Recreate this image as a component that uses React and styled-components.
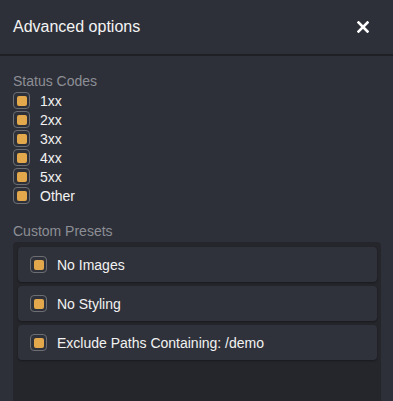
import React, { useState } from 'react';
import styled, { createGlobalStyle } from 'styled-components';

const GlobalStyle = createGlobalStyle`
    html, body {
        margin: 0;
        padding: 0;
        background-color: #2e3039;
        font-family: "Liberation Sans", Arial, sans-serif;
    }
`;

const Panel = styled.div`
    width: 393px;
    height: 401px;
    overflow: hidden;
    background-color: #2e3039;
    color: #f2f2f2;
`;

const Header = styled.div`
    height: 54px;
    padding: 0 13px;
    display: flex;
    align-items: center;
    justify-content: space-between;
    border-bottom: 2px solid #1f2026;
`;

const Title = styled.h1`
    margin: 0;
    font-size: 16px;
    font-weight: normal;
    color: #f4f4f4;
`;

const CloseButton = styled.button`
    width: 24px;
    height: 24px;
    margin-right: 5px;
    padding: 0;
    border: none;
    background: none;
    display: flex;
    align-items: center;
    justify-content: center;
    cursor: pointer;
`;

const Body = styled.div`
    padding: 17px 12px 0 13px;
`;

const SectionLabel = styled.div`
    font-size: 14px;
    line-height: 16px;
    color: #8c8e95;
    margin-bottom: ${p => p.$gap || 2}px;
`;

const CodeList = styled.div`
    display: flex;
    flex-direction: column;
    margin-bottom: 18px;
`;

const Row = styled.label`
    height: 19px;
    display: flex;
    align-items: center;
    gap: 10px;
    font-size: 14px;
    color: #f2f2f2;
    cursor: pointer;
`;

const Box = styled.span`
    width: 17px;
    height: 17px;
    box-sizing: border-box;
    border: 1.5px solid #6c6e74;
    border-radius: 4px;
    display: flex;
    align-items: center;
    justify-content: center;
    flex-shrink: 0;

    &::after {
        content: '';
        width: 10px;
        height: 10px;
        border-radius: 2px;
        background-color: ${p => (p.$checked ? '#e3a84b' : 'transparent')};
    }
`;

const Presets = styled.div`
    min-height: 200px;
    padding: 5px 4px 5px 5px;
    background-color: #25262c;
    border-radius: 4px;
    display: flex;
    flex-direction: column;
    gap: 4px;
`;

const PresetItem = styled.label`
    height: 35px;
    padding: 0 12px;
    display: flex;
    align-items: center;
    gap: 10px;
    background-color: #30323b;
    border-radius: 4px;
    box-shadow: 0 1px 2px rgba(0, 0, 0, 0.35);
    font-size: 14px;
    color: #f2f2f2;
    cursor: pointer;
`;

const codes = ['1xx', '2xx', '3xx', '4xx', '5xx', 'Other'];
const presets = ['No Images', 'No Styling', 'Exclude Paths Containing: /demo'];

const Check = ({ checked, onToggle }) => (
    <Box $checked={checked} onClick={onToggle} />
);

const App = () => {
    const [codeState, setCodeState] = useState(codes.map(() => true));
    const [presetState, setPresetState] = useState(presets.map(() => true));

    const toggle = (list, setList, i) => {
        setList(list.map((v, idx) => (idx === i ? !v : v)));
    };

    return (
        <Panel>
            <GlobalStyle />
            <Header>
                <Title>Advanced options</Title>
                <CloseButton aria-label="Close">
                    <svg width="12" height="12" viewBox="0 0 12 12">
                        <path d="M1.5 1.5 L10.5 10.5 M10.5 1.5 L1.5 10.5" stroke="#ffffff" strokeWidth="2.6" strokeLinecap="square" />
                    </svg>
                </CloseButton>
            </Header>
            <Body>
                <SectionLabel>Status Codes</SectionLabel>
                <CodeList>
                    {codes.map((code, i) => (
                        <Row key={code}>
                            <Check checked={codeState[i]} onToggle={() => toggle(codeState, setCodeState, i)} />
                            {code}
                        </Row>
                    ))}
                </CodeList>
                <SectionLabel $gap={3}>Custom Presets</SectionLabel>
                <Presets>
                    {presets.map((preset, i) => (
                        <PresetItem key={preset}>
                            <Check checked={presetState[i]} onToggle={() => toggle(presetState, setPresetState, i)} />
                            {preset}
                        </PresetItem>
                    ))}
                </Presets>
            </Body>
        </Panel>
    );
};

export default App;
